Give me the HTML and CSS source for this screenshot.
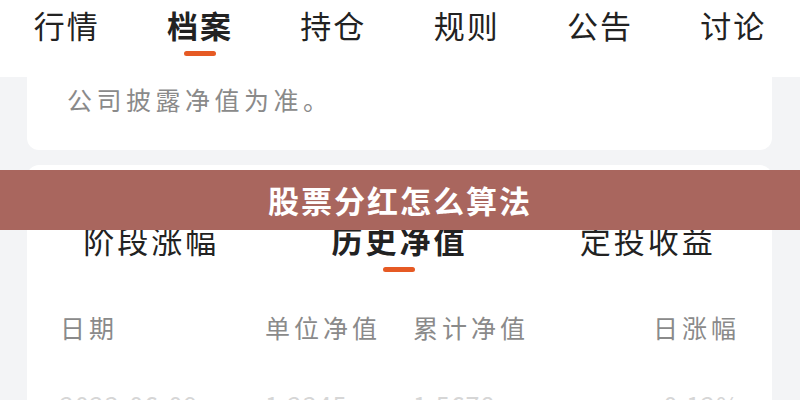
FILE: index.html
```html
<!DOCTYPE html>
<html lang="zh-CN">
<head>
    <meta charset="UTF-8">
    <meta name="viewport" content="width=device-width, initial-scale=1.0">
    <title>股票分红怎么算法</title>
    <link rel="stylesheet" href="styles.css">
</head>
<body>
    <!-- 顶部标签 -->
    <div class="top-tabs">
        <div class="top-tab">行情</div>
        <div class="top-tab active">档案<span class="bar"></span></div>
        <div class="top-tab">持仓</div>
        <div class="top-tab">规则</div>
        <div class="top-tab">公告</div>
        <div class="top-tab">讨论</div>
    </div>

    <div class="page">
        <div class="card note-card">
            <p class="note">公司披露净值为准。</p>
        </div>

        <div class="card nav-card">
            <div class="sub-tabs">
                <div class="sub-tab">阶段涨幅</div>
                <div class="sub-tab active">历史净值<span class="bar"></span></div>
                <div class="sub-tab">定投收益</div>
            </div>

            <div class="nav-row head">
                <span>日期</span>
                <span>单位净值</span>
                <span>累计净值</span>
                <span>日涨幅</span>
            </div>
            <div class="nav-row faint">
                <span>2023-06-09</span>
                <span>1.2345</span>
                <span>1.5678</span>
                <span>+0.12%</span>
            </div>
        </div>
    </div>

    <div class="title-banner">股票分红怎么算法</div>
</body>
</html>
```

FILE: styles.css
```css
body {
    margin: 0;
    width: 800px;
    height: 400px;
    overflow: hidden;
    background: #f3f4f6;
    font-family: "Noto Sans CJK SC", "Noto Sans", sans-serif;
    color: #222;
    position: relative;
}

.top-tabs {
    display: flex;
    height: 77px;
    background: #fff;
}

.top-tab {
    flex: 1;
    display: flex;
    flex-direction: column;
    align-items: center;
    padding-top: 7px;
    font-size: 31px;
    line-height: 36px;
    letter-spacing: 2px;
}

.top-tab.active,
.sub-tab.active {
    font-weight: bold;
}

.bar {
    display: block;
    width: 32px;
    height: 5px;
    margin-top: 8px;
    border-radius: 3px;
    background: #e65a24;
}

.page {
    padding: 0 28px 0 27px;
}

.card {
    background: #fff;
}

.note-card {
    height: 73px;
    padding-left: 40px;
    border-radius: 0 0 12px 12px;
    box-sizing: border-box;
}

.note {
    margin: 0;
    padding-top: 7px;
    font-size: 25px;
    line-height: 30px;
    letter-spacing: 4.5px;
    color: #8a8a8a;
}

.nav-card {
    margin-top: 15px;
    height: 260px;
    border-radius: 12px 12px 0 0;
    padding: 0 32px 0 33px;
}

.sub-tabs {
    display: flex;
    margin: 0 -32px 0 -33px;
    padding-top: 57px;
}

.sub-tab {
    flex: 1;
    display: flex;
    flex-direction: column;
    align-items: center;
    font-size: 31px;
    line-height: 36px;
    letter-spacing: 3px;
}

.sub-tab .bar {
    margin-top: 9px;
}

.nav-row {
    display: grid;
    grid-template-columns: 205px 148px 1fr auto;
    font-size: 25px;
    line-height: 30px;
    letter-spacing: 4px;
    color: #8a8a8a;
}

.nav-row.head {
    margin-top: 40px;
}

.nav-row.faint {
    margin-top: 48px;
    color: #d6d6d6;
    letter-spacing: 1px;
}

/* 标题横幅 */
.title-banner {
    position: absolute;
    left: 0;
    top: 170px;
    width: 800px;
    height: 60px;
    background: #a9665e;
    color: #fff;
    font-size: 31px;
    font-weight: bold;
    line-height: 60px;
    text-align: center;
    letter-spacing: 2px;
}
```
